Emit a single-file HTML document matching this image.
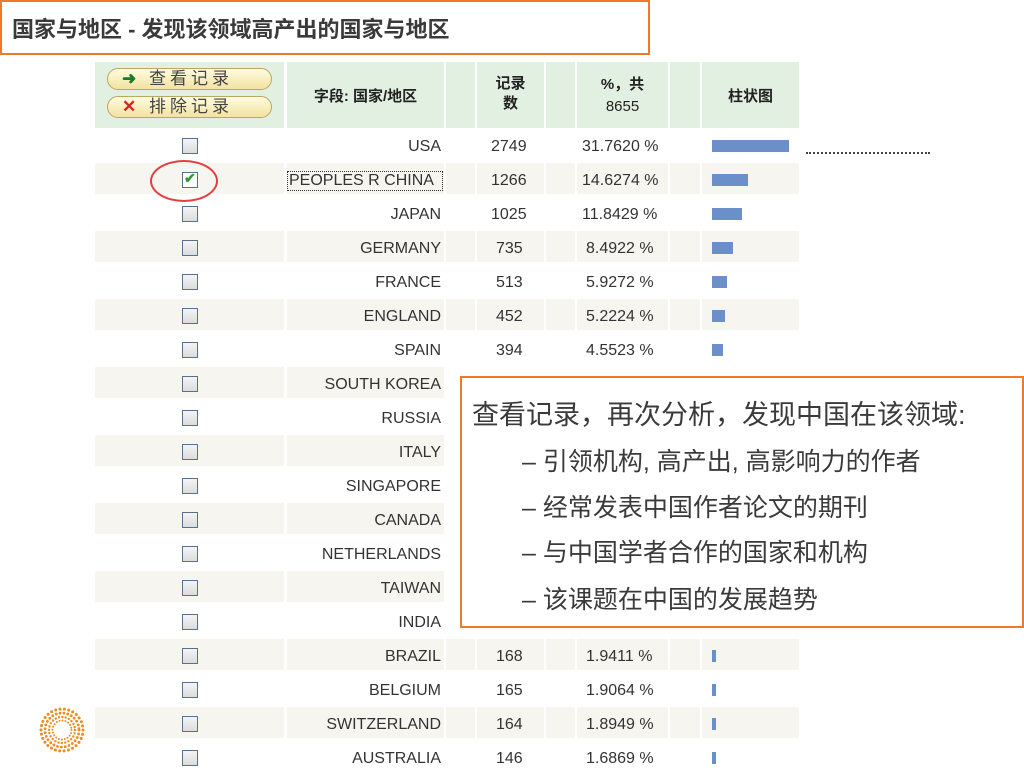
<!DOCTYPE html>
<html><head><meta charset="utf-8">
<style>
body{margin:0;width:1024px;height:768px;overflow:hidden;background:#fff;position:relative;font-family:"Liberation Sans","Noto Sans CJK SC",sans-serif;}
.a{position:absolute}
.title{left:0;top:0;width:646px;height:51px;border:2px solid #f07a28;}
.title span{position:absolute;left:10px;top:10px;font-size:22px;font-weight:bold;color:#3a3a3a;}
.hd{background:#e2f0e2;top:62px;height:66px}
.c{position:absolute;height:31px}
.sh .c{background:#f6f5f0}
.row{position:absolute;left:0;width:1024px;height:34px;font-size:16px;color:#333}
.t{position:absolute;top:9px;white-space:nowrap}
.cb{position:absolute;left:182px;top:9px;width:14px;height:14px;border:1.5px solid #5a6f8a;background:linear-gradient(#f4f4f4,#dcdcdc)}
.bar{position:absolute;left:712px;top:11px;height:12px;background:#6b8fc9}
.hdt{position:absolute;font-size:15px;font-weight:bold;color:#222;text-align:center}
.btn{position:absolute;left:107px;width:163px;height:20px;border:1px solid #b8a860;border-radius:11px;background:linear-gradient(#fffbe0,#f2e3a0);font-size:17px;color:#444;letter-spacing:4px;line-height:20px}
.pop{left:460px;top:376px;width:560px;height:248px;border:2px solid #f07a28;background:#fff}
.pop div{position:absolute;font-size:25px;color:#3a3a3a;white-space:nowrap}
</style></head><body>
<div class="a title"><span>国家与地区 - 发现该领域高产出的国家与地区</span></div>

<div class="a hd" style="left:95px;width:189px"></div>
<div class="a hd" style="left:287px;width:157px"></div>
<div class="a hd" style="left:446px;width:29px"></div>
<div class="a hd" style="left:477px;width:67px"></div>
<div class="a hd" style="left:546px;width:29px"></div>
<div class="a hd" style="left:577px;width:91px"></div>
<div class="a hd" style="left:670px;width:30px"></div>
<div class="a hd" style="left:702px;width:97px"></div>
<div class="btn" style="top:68px"><span style="color:#1a7a2a;margin-left:14px;font-weight:bold">➜</span> 查看记录</div>
<div class="btn" style="top:96px"><span style="color:#e02020;margin-left:14px;font-weight:bold">✕</span> 排除记录</div>
<div class="hdt" style="left:287px;width:157px;top:85px">字段: 国家/地区</div>
<div class="hdt" style="left:477px;width:67px;top:74px;line-height:20px">记录<br>数</div>
<div class="hdt" style="left:577px;width:91px;top:74px;line-height:22px">%，共<br><span style="font-weight:normal">8655</span></div>
<div class="hdt" style="left:702px;width:97px;top:85px">柱状图</div>

<div class="row" style="top:129px"><div class="cb"></div><div class="t" style="right:583px">USA</div><div class="t" style="left:491px">2749</div><div class="t" style="left:582px">31.7620 %</div><div class="bar" style="width:77px"></div></div>
<div class="a" style="left:806px;top:152px;width:124px;border-top:2px dotted #444"></div>
<div class="row sh" style="top:163px"><div class="c" style="left:95px;width:189px"></div><div class="c" style="left:287px;width:157px"></div><div class="c" style="left:446px;width:29px"></div><div class="c" style="left:477px;width:67px"></div><div class="c" style="left:546px;width:29px"></div><div class="c" style="left:577px;width:91px"></div><div class="c" style="left:670px;width:30px"></div><div class="c" style="left:702px;width:97px"></div><div class="cb" style="background:#fff;"><span style="position:absolute;left:1px;top:-3px;color:#2a9a2a;font-size:14px;font-weight:bold">✔</span></div><div class="t" style="left:287px;top:8px;border:1px dotted #333;padding:0 1px;width:152px;overflow:hidden">PEOPLES R CHINA</div><div class="t" style="left:491px">1266</div><div class="t" style="left:582px">14.6274 %</div><div class="bar" style="width:36px"></div></div>
<div class="a" style="left:150px;top:160px;width:64px;height:38px;border:2px solid #e04040;border-radius:50%"></div>
<div class="row" style="top:197px"><div class="cb"></div><div class="t" style="right:583px">JAPAN</div><div class="t" style="left:491px">1025</div><div class="t" style="left:582px">11.8429 %</div><div class="bar" style="width:30px"></div></div>
<div class="row sh" style="top:231px"><div class="c" style="left:95px;width:189px"></div><div class="c" style="left:287px;width:157px"></div><div class="c" style="left:446px;width:29px"></div><div class="c" style="left:477px;width:67px"></div><div class="c" style="left:546px;width:29px"></div><div class="c" style="left:577px;width:91px"></div><div class="c" style="left:670px;width:30px"></div><div class="c" style="left:702px;width:97px"></div><div class="cb"></div><div class="t" style="right:583px">GERMANY</div><div class="t" style="left:496px">735</div><div class="t" style="left:586px">8.4922 %</div><div class="bar" style="width:21px"></div></div>
<div class="row" style="top:265px"><div class="cb"></div><div class="t" style="right:583px">FRANCE</div><div class="t" style="left:496px">513</div><div class="t" style="left:586px">5.9272 %</div><div class="bar" style="width:15px"></div></div>
<div class="row sh" style="top:299px"><div class="c" style="left:95px;width:189px"></div><div class="c" style="left:287px;width:157px"></div><div class="c" style="left:446px;width:29px"></div><div class="c" style="left:477px;width:67px"></div><div class="c" style="left:546px;width:29px"></div><div class="c" style="left:577px;width:91px"></div><div class="c" style="left:670px;width:30px"></div><div class="c" style="left:702px;width:97px"></div><div class="cb"></div><div class="t" style="right:583px">ENGLAND</div><div class="t" style="left:496px">452</div><div class="t" style="left:586px">5.2224 %</div><div class="bar" style="width:13px"></div></div>
<div class="row" style="top:333px"><div class="cb"></div><div class="t" style="right:583px">SPAIN</div><div class="t" style="left:496px">394</div><div class="t" style="left:586px">4.5523 %</div><div class="bar" style="width:11px"></div></div>
<div class="row sh" style="top:367px"><div class="c" style="left:95px;width:189px"></div><div class="c" style="left:287px;width:157px"></div><div class="cb"></div><div class="t" style="right:583px">SOUTH KOREA</div></div>
<div class="row" style="top:401px"><div class="cb"></div><div class="t" style="right:583px">RUSSIA</div></div>
<div class="row sh" style="top:435px"><div class="c" style="left:95px;width:189px"></div><div class="c" style="left:287px;width:157px"></div><div class="cb"></div><div class="t" style="right:583px">ITALY</div></div>
<div class="row" style="top:469px"><div class="cb"></div><div class="t" style="right:583px">SINGAPORE</div></div>
<div class="row sh" style="top:503px"><div class="c" style="left:95px;width:189px"></div><div class="c" style="left:287px;width:157px"></div><div class="cb"></div><div class="t" style="right:583px">CANADA</div></div>
<div class="row" style="top:537px"><div class="cb"></div><div class="t" style="right:583px">NETHERLANDS</div></div>
<div class="row sh" style="top:571px"><div class="c" style="left:95px;width:189px"></div><div class="c" style="left:287px;width:157px"></div><div class="cb"></div><div class="t" style="right:583px">TAIWAN</div></div>
<div class="row" style="top:605px"><div class="cb"></div><div class="t" style="right:583px">INDIA</div></div>
<div class="row sh" style="top:639px"><div class="c" style="left:95px;width:189px"></div><div class="c" style="left:287px;width:157px"></div><div class="c" style="left:446px;width:29px"></div><div class="c" style="left:477px;width:67px"></div><div class="c" style="left:546px;width:29px"></div><div class="c" style="left:577px;width:91px"></div><div class="c" style="left:670px;width:30px"></div><div class="c" style="left:702px;width:97px"></div><div class="cb"></div><div class="t" style="right:583px">BRAZIL</div><div class="t" style="left:496px">168</div><div class="t" style="left:586px">1.9411 %</div><div class="bar" style="width:4px"></div></div>
<div class="row" style="top:673px"><div class="cb"></div><div class="t" style="right:583px">BELGIUM</div><div class="t" style="left:496px">165</div><div class="t" style="left:586px">1.9064 %</div><div class="bar" style="width:4px"></div></div>
<div class="row sh" style="top:707px"><div class="c" style="left:95px;width:189px"></div><div class="c" style="left:287px;width:157px"></div><div class="c" style="left:446px;width:29px"></div><div class="c" style="left:477px;width:67px"></div><div class="c" style="left:546px;width:29px"></div><div class="c" style="left:577px;width:91px"></div><div class="c" style="left:670px;width:30px"></div><div class="c" style="left:702px;width:97px"></div><div class="cb"></div><div class="t" style="right:583px">SWITZERLAND</div><div class="t" style="left:496px">164</div><div class="t" style="left:586px">1.8949 %</div><div class="bar" style="width:4px"></div></div>
<div class="row" style="top:741px"><div class="cb"></div><div class="t" style="right:583px">AUSTRALIA</div><div class="t" style="left:496px">146</div><div class="t" style="left:586px">1.6869 %</div><div class="bar" style="width:4px"></div></div>

<svg class="a" style="left:38px;top:706px" width="48" height="48" viewBox="0 0 48 48">
<g fill="none" stroke="#f08a1a" stroke-linecap="round">
<circle cx="24" cy="24" r="21" stroke-width="3" stroke-dasharray="0 4.4"/>
<circle cx="24" cy="24" r="17" stroke-width="2.8" stroke-dasharray="0 3.9"/>
<circle cx="24" cy="24" r="13" stroke-width="2.4" stroke-dasharray="0 3.4"/>
<circle cx="24" cy="24" r="9.5" stroke-width="2" stroke-dasharray="0 3"/>
</g></svg>

<div class="a pop">
<div style="left:10px;top:15px;font-size:27px">查看记录，再次分析，发现中国在该领域:</div>
<div style="left:60px;top:64px">– 引领机构, 高产出, 高影响力的作者</div>
<div style="left:60px;top:110px">– 经常发表中国作者论文的期刊</div>
<div style="left:60px;top:155px">– 与中国学者合作的国家和机构</div>
<div style="left:60px;top:202px">– 该课题在中国的发展趋势</div>
</div>
</body></html>
